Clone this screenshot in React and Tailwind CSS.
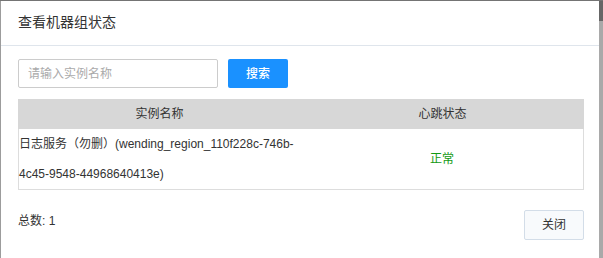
import React, { useState } from "react";

const font = { fontFamily: '"Liberation Sans", "Noto Sans CJK SC", sans-serif' };

const rows = [
  {
    name: "日志服务（勿删）(wending_region_110f228c-746b-4c45-9548-44968640413e)",
    status: "正常",
  },
];

const App = () => {
  const [keyword, setKeyword] = useState("");

  return (
    <div className="flex h-[258px] w-[603px] overflow-hidden border-t border-[#747474] bg-[#9c9c9c] pl-[1px]" style={font}>
      <div className="flex h-full w-[598px] flex-col bg-white text-[#333]">
        {/* header */}
        <div className="flex h-[45px] items-center border-b border-[#dfe5ec] px-[17px] pb-[1px]">
          <span className="text-[14px]">查看机器组状态</span>
        </div>

        <div className="flex flex-col px-[17px] pt-[13px]">
          {/* search */}
          <div className="flex items-center">
            <input
              className="h-[29px] w-[200px] rounded-[2px] border border-[#cccccc] px-[9px] text-[12px] text-[#333] placeholder:text-[#aaaaaa] focus:outline-none"
              placeholder="请输入实例名称"
              value={keyword}
              onChange={(e) => setKeyword(e.target.value)}
            />
            <button className="ml-[10px] h-[29px] w-[60px] rounded-[2px] bg-[#1a91ff] text-[12px] font-medium text-white">
              搜索
            </button>
          </div>

          {/* table */}
          <div className="mt-[11px] w-[566px]">
            <div className="grid h-[30px] grid-cols-2 items-center bg-[#d7d7d7] text-center text-[12px] text-[#333]">
              <div>实例名称</div>
              <div>心跳状态</div>
            </div>
            {rows.map((r) => (
              <div key={r.name} className="grid grid-cols-2 items-center border-x border-b border-[#dddddd] text-[12px]">
                <div className="pr-[4px] leading-[30px] text-[#333]">{r.name}</div>
                <div className="text-center text-[#139a13]">{r.status}</div>
              </div>
            ))}
          </div>

          {/* footer */}
          <div className="mt-[20px] flex w-[566px] items-start justify-between">
            <span className="mt-[1px] text-[12px] leading-[20px] text-[#333]">总数: 1</span>
            <button className="h-[30px] w-[60px] rounded-[2px] border border-[#d3dde8] bg-[#f8fafc] text-[12px] text-[#333]">
              关闭
            </button>
          </div>
        </div>
      </div>
      <div className="flex w-[4px] flex-col">
        <div className="h-[20px] bg-[#666666]" />
        <div className="flex-1 bg-[#a9a9a9]" />
      </div>
    </div>
  );
};

export default App;
